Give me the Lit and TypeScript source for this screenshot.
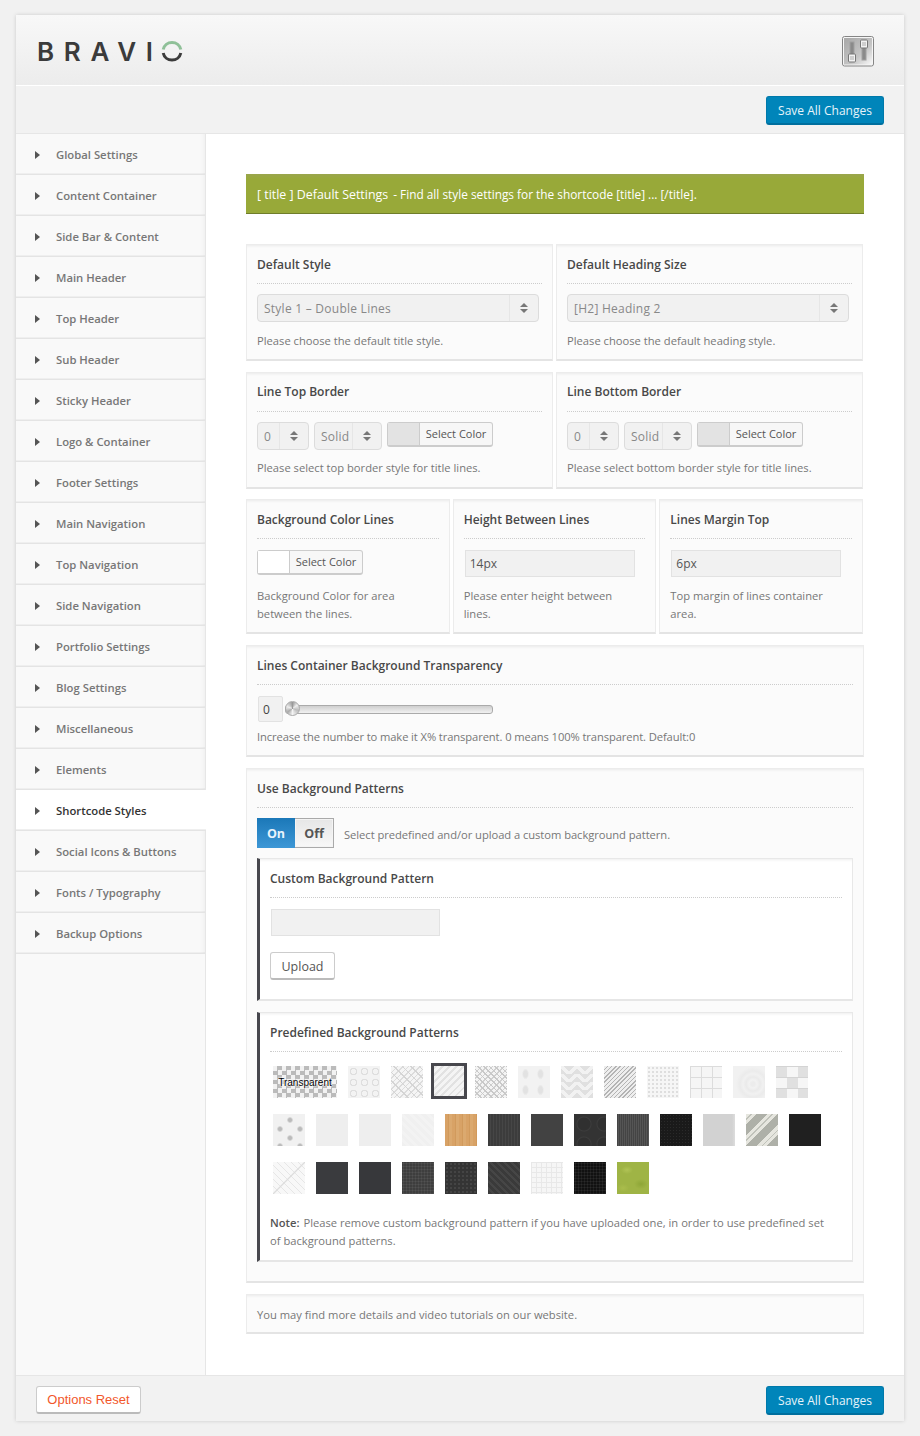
import { LitElement, html, css } from 'lit'
import { customElement } from 'lit/decorators.js'

const NAV = [
  'Global Settings', 'Content Container', 'Side Bar & Content', 'Main Header', 'Top Header',
  'Sub Header', 'Sticky Header', 'Logo & Container', 'Footer Settings', 'Main Navigation',
  'Top Navigation', 'Side Navigation', 'Portfolio Settings', 'Blog Settings', 'Miscellaneous',
  'Elements', 'Shortcode Styles', 'Social Icons & Buttons', 'Fonts / Typography', 'Backup Options',
]

// one class per pattern swatch, in the order of the grid
const SWATCHES = [
  'rings', 'cross', 'sel', 'weave', 'damask', 'zig', 'diag', 'dots', 'grid', 'swirl', 'tiles',
  'studs', 'plain', 'plain', 'plain2', 'wood', 'darklines', 'dark', 'hex', 'darklines2', 'black', 'silver', 'stripe', 'black2',
  'chev', 'dark2', 'dark3', 'dark4', 'dark5', 'dark6', 'dots2', 'black3', 'green',
]

@customElement('app-root')
export class AppRoot extends LitElement {
  static styles = css`
    :host {
      display: block;
      background: #f1f1f1;
      font-family: 'Open Sans', sans-serif;
      padding: 15px 16px;
      height: 1436px;
      box-sizing: border-box;
    }

    .frame {
      background: #fff;
      box-shadow: 0 0 4px rgba(0, 0, 0, 0.16);
      height: 1406px;
      display: flex;
      flex-direction: column;
    }

    .head {
      height: 71px;
      box-sizing: border-box;
      background: linear-gradient(#f8f8f8, #ececec);
      border-bottom: 1px solid #fff;
      display: flex;
      align-items: center;
      justify-content: space-between;
      padding: 0 30px 0 21px;
      flex: none;
    }

    .logo {
      display: flex;
      align-items: center;
      color: #3b3b3b;
      font: 600 26px Inter, sans-serif;
      letter-spacing: 9.7px;
      line-height: 22px;
      margin-top: 3px;
    }

    .logo svg {
      display: block;
      margin-left: -2px;
      margin-top: -1px;
    }

    .tools {
      display: block;
      margin-top: 2px;
    }

    .toolbar {
      height: 48px;
      box-sizing: border-box;
      background: #f2f2f2;
      border-bottom: 1px solid #e6e6e6;
      display: flex;
      align-items: flex-start;
      justify-content: flex-end;
      padding: 10px 20px 0;
      flex: none;
    }

    .save {
      width: 118px;
      height: 29px;
      box-sizing: border-box;
      background: #0085ba;
      border: 1px solid #0079aa;
      border-bottom: 2px solid #006f9e;
      border-radius: 3px;
      color: #e6f4fa;
      font-size: 12px;
      line-height: 27px;
      text-align: center;
    }

    .body {
      flex: 1;
      display: flex;
      min-height: 0;
    }

    .side {
      width: 190px;
      box-sizing: border-box;
      background: #f9f9f9;
      border-right: 1px solid #e6e6e6;
      flex: none;
    }

    .item {
      height: 41px;
      box-sizing: border-box;
      border-bottom: 1px solid #e4e4e4;
      display: flex;
      align-items: center;
      padding: 1px 0 0 19px;
      font-size: 11.3px;
      font-weight: 600;
      color: #777;
      box-shadow: inset -6px 0 5px -5px rgba(0, 0, 0, 0.05), inset 0 -1px 0 #efefef;
    }

    .item::before {
      content: '';
      width: 0;
      height: 0;
      border-left: 5px solid #555;
      border-top: 4.5px solid transparent;
      border-bottom: 4.5px solid transparent;
      margin-right: 16px;
    }

    .item.on {
      background: #fff;
      color: #333;
      box-shadow: inset 0 -1px 0 #efefef;
      margin-right: -1px;
      position: relative;
    }

    .main {
      flex: 1;
      padding: 40px 40px 0;
      min-width: 0;
    }

    .banner {
      height: 40px;
      box-sizing: border-box;
      background: linear-gradient(#9aa54d, #98a939 5px);
      border-bottom: 1px solid #6f7d2a;
      color: #fff;
      font-size: 11.85px;
      line-height: 41px;
      padding-left: 11px;
      margin-bottom: 30px;
    }

    .banner b {
      font-size: 12.4px;
      font-weight: 400;
      margin-right: 2px;
    }

    .row {
      display: grid;
      gap: 3px;
      margin-right: 1px;
      margin-bottom: 11px;
    }

    .row.tight { margin-bottom: 10px; }
    .two { grid-template-columns: 1fr 1fr; }
    .three { grid-template-columns: 1fr 1fr 1fr; }

    .panel {
      box-sizing: border-box;
      background: #fbfbfb;
      border: 1px solid #ececec;
      border-bottom: 2px solid #e4e4e4;
      box-shadow: inset 0 3px 3px -2px rgba(0, 0, 0, 0.07);
      padding: 9px 10px 9px;
    }

    .panel.wide { margin-bottom: 11px; }

    .title {
      font-size: 12px;
      font-weight: 600;
      color: #484848;
      line-height: 20px;
      padding: 1px 0 8px;
      border-bottom: 1px dotted #ccc;
      margin-bottom: 10px;
    }

    .tight .panel { padding-bottom: 10px; }
    .tight .title { padding: 0 0 9px; }
    .tight .desc { margin-top: 9px; }

    .desc {
      font-size: 11.2px;
      line-height: 18px;
      color: #777;
      margin-top: 10px;
    }

    .three .desc { padding-right: 5px; }

    .controls {
      display: flex;
      align-items: center;
      height: 28px;
    }

    .select {
      height: 28px;
      box-sizing: border-box;
      background: #f1f1f1;
      border: 1px solid #dcdcdc;
      border-radius: 4px;
      display: flex;
      align-items: center;
      color: #888;
      font-size: 12px;
      letter-spacing: 0.25px;
    }

    .select.full { width: 282px; }
    .select.num { width: 52px; margin-right: 5px; }
    .select.solid { width: 68px; margin-right: 5px; }

    .select span {
      flex: 1;
      padding-left: 6px;
      white-space: nowrap;
    }

    .select .arrows {
      flex: none;
      width: 28px;
      height: 26px;
      border-left: 1px solid #e6e6e6;
      display: flex;
      flex-direction: column;
      align-items: center;
      justify-content: center;
      gap: 2px;
      padding: 0;
    }

    .arrows::before, .arrows::after {
      content: '';
      width: 0;
      height: 0;
      border-left: 4px solid transparent;
      border-right: 4px solid transparent;
    }

    .arrows::before { border-bottom: 4px solid #777; }
    .arrows::after { border-top: 4px solid #777; }

    .color {
      height: 25px;
      box-sizing: border-box;
      width: 106px;
      background: #f7f7f7;
      border: 1px solid #ccc;
      border-bottom-width: 2px;
      border-radius: 3px;
      display: flex;
      font-size: 11px;
      color: #555;
      line-height: 22px;
      margin-top: -3px;
    }

    .three .color { margin-top: -1px; }

    .color i {
      width: 31px;
      background: #e3e3e3;
      border-right: 1px solid #ccc;
    }

    .color i.white { background: #fff; }

    .color span {
      flex: 1;
      text-align: center;
    }

    .text {
      width: 170px;
      height: 27px;
      box-sizing: border-box;
      background: #f1f1f1;
      border: 1px solid #e2e2e2;
      font-size: 12px;
      color: #555;
      line-height: 25px;
      padding-left: 4px;
      margin-left: 1px;
      margin-top: 1px;
    }

    .slider-val {
      width: 25px;
      height: 26px;
      box-sizing: border-box;
      margin-left: 1px;
      background: #f1f1f1;
      border: 1px solid #e2e2e2;
      border-radius: 2px;
      font-size: 12px;
      color: #444;
      line-height: 26px;
      padding-left: 4px;
    }

    .track {
      position: relative;
      width: 208px;
      height: 9px;
      box-sizing: border-box;
      margin-left: 2px;
      margin-top: 1px;
      background: linear-gradient(#cfcfcf, #f1f1f1);
      border: 1px solid #aaa;
      border-radius: 3px;
    }

    .knob {
      position: absolute;
      left: -1px;
      top: -5px;
      width: 15px;
      height: 15px;
      box-sizing: border-box;
      border-radius: 50%;
      border: 1px solid #aaa;
      background: conic-gradient(#999, #eee 15%, #bbb 30%, #f4f4f4 50%, #aaa 65%, #eee 80%, #999);
    }

    .desc.tight {
      margin-top: 5px;
      letter-spacing: -0.1px;
    }

    .toggle-row {
      display: flex;
      align-items: center;
      height: 30px;
      margin-bottom: 10px;
      font-size: 11.2px;
      color: #777;
    }

    .toggle-note {
      padding-top: 2px;
      letter-spacing: -0.05px;
    }

    .toggle {
      display: flex;
      width: 77px;
      height: 30px;
      margin-right: 10px;
      font-size: 12.5px;
      font-weight: 700;
      line-height: 31px;
      text-align: center;
    }

    .toggle .yes {
      width: 38px;
      background: linear-gradient(#1b78b8, #3d97d6);
      color: #e8f4fc;
    }

    .toggle .no {
      flex: 1;
      box-sizing: border-box;
      background: linear-gradient(#e6e6e6, #f8f8f8);
      border: 1px solid #aaa;
      border-left: none;
      box-shadow: inset 0 0 0 1px #f4f4f4;
      color: #555;
      line-height: 29px;
    }

    .inner {
      background: #fff;
      border: 1px solid #e8e8e8;
      border-left: 3px solid #47474d;
      border-bottom: 2px solid #e6e6e6;
      box-sizing: border-box;
      box-shadow: inset 0 3px 3px -2px rgba(0, 0, 0, 0.07);
      padding: 9px 10px 0;
      margin-bottom: 11px;
    }

    .inner.upload { height: 143px; }
    .inner.patterns { height: 250px; margin-bottom: 10px; }

    .inner .text {
      width: 169px;
      margin: 11px 0 0 1px;
      display: block;
    }

    .upload-btn {
      display: block;
      width: 65px;
      height: 28px;
      box-sizing: border-box;
      margin-top: 16px;
      background: #fff;
      border: 1px solid #ccc;
      border-bottom: 2px solid #bbb;
      border-radius: 3px;
      font-size: 12.5px;
      color: #555;
      text-align: center;
      line-height: 27px;
    }

    .swatches {
      display: flex;
      flex-wrap: wrap;
      gap: 16px 11px;
      padding: 4px 0 0 3px;
      width: 568px;
      box-sizing: border-box;
    }

    .sw {
      width: 32px;
      height: 32px;
      background: #eee;
    }

    .note {
      margin-top: 20px;
      padding-right: 10px;
      font-size: 11.2px;
      line-height: 18px;
      color: #777;
    }

    .note b {
      font-weight: 600;
      color: #555;
      margin-right: 1px;
    }

    .footer-note {
      height: 40px;
      box-sizing: border-box;
      padding: 0 10px;
      font-size: 11.2px;
      line-height: 40px;
      color: #777;
    }

    .foot {
      height: 46px;
      box-sizing: border-box;
      background: #f2f2f2;
      border-top: 1px solid #e6e6e6;
      display: flex;
      align-items: flex-start;
      justify-content: space-between;
      padding: 10px 20px 0;
      flex: none;
    }

    .reset {
      width: 105px;
      height: 28px;
      box-sizing: border-box;
      background: #fff;
      border: 1px solid #ccc;
      border-bottom: 2px solid #bbb;
      border-radius: 3px;
      font: 13px 'Liberation Sans', sans-serif;
      color: #f2572b;
      text-align: center;
      line-height: 26px;
    }

    /* swatch patterns */
    .transparent {
      width: 64px;
      background: repeating-conic-gradient(#bbb 0 25%, #f2f2f2 0 50%) 0 0 / 9px 9px;
      font: 10px/33px 'Liberation Sans', sans-serif;
      color: #000;
      text-align: center;
      text-shadow: 0 0 2px #fff, 0 0 2px #fff, 0 0 1px #fff, 0 0 1px #fff;
    }
    .rings { background: radial-gradient(circle, transparent 2.5px, #dedede 2.5px, #dedede 3.5px, transparent 4px) 0 0 / 11px 11px, #f3f3f3; }
    .cross { background: repeating-linear-gradient(45deg, #d4d4d4 0 1px, transparent 1px 6px), repeating-linear-gradient(-45deg, #dcdcdc 0 1px, transparent 1px 4px), #f5f5f5; }
    .sel {
      box-sizing: border-box;
      width: 36px;
      height: 36px;
      margin: -3px -3px -1px;
      border: 3px solid #47474d;
      background: repeating-linear-gradient(-45deg, #e2e2e2 0 2px, #f4f4f4 2px 5px);
    }
    .weave { background: repeating-linear-gradient(45deg, #c8c8c8 0 1px, transparent 1px 4px), repeating-linear-gradient(-45deg, #d0d0d0 0 1px, transparent 1px 4px), #f4f4f4; }
    .damask { background: radial-gradient(ellipse 5px 8px, #e2e2e2 40%, transparent 70%) 0 0 / 15px 16px, #f2f2f2; }
    .zig {
      background:
        linear-gradient(135deg, #e0e0e0 25%, transparent 25%) -8px 0 / 16px 8px,
        linear-gradient(225deg, #e0e0e0 25%, transparent 25%) -8px 0 / 16px 8px,
        linear-gradient(315deg, #e0e0e0 25%, transparent 25%) 0 0 / 16px 8px,
        linear-gradient(45deg, #e0e0e0 25%, transparent 25%) 0 0 / 16px 8px,
        #f2f2f2;
    }
    .diag { background: repeating-linear-gradient(-45deg, #b4b4b4 0 1px, #eeeeee 1px 3px); }
    .dots { background: radial-gradient(circle, #dedede 1px, transparent 1.5px) 0 0 / 4px 4px, #f6f6f6; }
    .grid { background: linear-gradient(#dcdcdc 1px, transparent 1px) 0 0 / 11px 11px, linear-gradient(90deg, #dcdcdc 1px, transparent 1px) 0 0 / 11px 11px, #f5f5f5; }
    .swirl { background: radial-gradient(circle at 20px 18px, #ececec 2px, #f2f2f2 4px, #eaeaea 7px, #f1f1f1 10px, #ebebeb 13px, #f1f1f1 17px); }
    .tiles {
      background:
        linear-gradient(#d4d4d4 1px, transparent 1px) 0 0 / 11px 11px,
        repeating-conic-gradient(#f6f6f6 0 25%, #e0e0e0 0 50%) 0 0 / 22px 22px;
    }
    .studs {
      background:
        radial-gradient(circle at 17px 6px, #bbb 1.5px, #d6d6d6 2.5px, transparent 3.2px),
        radial-gradient(circle at 7px 15px, #bbb 1.5px, #d6d6d6 2.5px, transparent 3.2px),
        radial-gradient(circle at 27px 15px, #bbb 1.5px, #d6d6d6 2.5px, transparent 3.2px),
        radial-gradient(circle at 17px 24px, #bbb 1.5px, #d6d6d6 2.5px, transparent 3.2px),
        radial-gradient(circle at 7px 32px, #bbb 1.5px, #d6d6d6 2.5px, transparent 3.2px),
        radial-gradient(circle at 27px 32px, #bbb 1.5px, #d6d6d6 2.5px, transparent 3.2px),
        #f1f1f1;
    }
    .plain { background: #eee; }
    .plain2 { background: repeating-linear-gradient(45deg, #f0f0f0 0 3px, #f3f3f3 3px 6px); }
    .wood { background: repeating-linear-gradient(90deg, #d8a266 0 3px, #d19a5c 3px 4px, #dba96f 4px 7px); }
    .darklines { background: repeating-linear-gradient(90deg, #3c3c3c 0 2px, #464646 2px 3px); }
    .dark { background: #424242; }
    .hex { background: radial-gradient(circle, #303030 6px, #3c3c3c 7px, #333 8px) 0 0 / 20px 20px; }
    .darklines2 { background: repeating-linear-gradient(90deg, #444 0 1px, #555 1px 2px); }
    .black { background: radial-gradient(circle, #2a2a2a 0.7px, #1a1a1a 1px) 0 0 / 3px 3px; }
    .silver { background: linear-gradient(90deg, transparent 29px, #ddd), #d2d2d2; }
    .stripe { background: repeating-linear-gradient(-45deg, #aeb0a8 0 8px, #e6e6df 8px 11px, #c0c2ba 11px 12px, #e6e6df 12px 15px); }
    .black2 { background: #202020; }
    .chev {
      background:
        linear-gradient(-45deg, transparent 48%, #ddd 49%, #ddd 51%, transparent 52%),
        repeating-linear-gradient(45deg, #e6e6e6 0 1px, #f8f8f8 1px 5px);
    }
    .dark2 { background: #3a3b3e; }
    .dark3 { background: #37383b; }
    .dark4 { background: radial-gradient(circle, #525252 0.8px, #3e3e3e 1.2px) 0 0 / 3px 3px; }
    .dark5 { background: radial-gradient(circle, #444 0.8px, #343434 1.2px) 0 0 / 4px 4px; }
    .dark6 { background: repeating-linear-gradient(45deg, #3a3a3a 0 3px, #464646 3px 5px); }
    .dots2 { background: linear-gradient(#e8e8e8 1px, transparent 1px) 0 0 / 5px 5px, linear-gradient(90deg, #e8e8e8 1px, transparent 1px) 0 0 / 5px 5px, #f6f6f6; }
    .black3 { background: radial-gradient(circle, #2a2a2a 0.8px, #111 1.2px) 0 0 / 3px 3px; }
    .green {
      background:
        radial-gradient(ellipse 6px 4px at 10px 8px, #b0c355, transparent),
        radial-gradient(ellipse 7px 5px at 24px 22px, #8ea637, transparent),
        radial-gradient(ellipse 6px 4px at 6px 26px, #aabd4c, transparent),
        #9fb445;
    }
  `

  private arrows() {
    return html`<span class="arrows"></span>`
  }

  private dropdown(kind: string, label: string) {
    return html`<div class="select ${kind}"><span>${label}</span>${this.arrows()}</div>`
  }

  private borderPanel(title: string, desc: string) {
    return html`
      <div class="panel">
        <div class="title">${title}</div>
        <div class="controls">
          ${this.dropdown('num', '0')}
          ${this.dropdown('solid', 'Solid')}
          <div class="color"><i></i><span>Select Color</span></div>
        </div>
        <div class="desc">${desc}</div>
      </div>
    `
  }

  render() {
    return html`
      <div class="frame">
        <div class="head">
          <div class="logo">
            <span>BRAVI</span>
            <svg width="22" height="22" viewBox="0 0 22 22">
              <path d="M2.2 9.5A9 9 0 0 1 19.8 9.5" fill="none" stroke="#8fc098" stroke-width="3"/>
              <path d="M2.2 13A9 9 0 0 0 19.8 13" fill="none" stroke="#3b3b3b" stroke-width="3"/>
            </svg>
          </div>
          <svg class="tools" width="32" height="31" viewBox="0 0 32 31">
            <defs>
              <linearGradient id="g" x1="0.1" y1="0.1" x2="0.95" y2="0.95">
                <stop offset="0" stop-color="#acacac"/><stop offset="0.6" stop-color="#c6c6c6"/><stop offset="1" stop-color="#f2f2f2"/>
              </linearGradient>
            </defs>
            <rect x="0.5" y="0.5" width="31" height="29.5" rx="2" fill="#f6f6f6" stroke="#858585"/>
            <rect x="2" y="2" width="28" height="26.5" fill="url(#g)"/>
            <rect x="8" y="6" width="4" height="13" fill="#8a8a8a" stroke="#a0a0a0"/>
            <rect x="6.5" y="18" width="7" height="8" rx="1" fill="#f2f2f2" stroke="#777"/>
            <path d="M8 21h4M8 23h4" stroke="#aaa"/>
            <rect x="20" y="11" width="4" height="13" fill="#8a8a8a" stroke="#a0a0a0"/>
            <rect x="18.5" y="4" width="7" height="8" rx="1" fill="#f2f2f2" stroke="#777"/>
            <path d="M20 7h4M20 9h4" stroke="#aaa"/>
          </svg>
        </div>

        <div class="toolbar"><div class="save">Save All Changes</div></div>

        <div class="body">
          <div class="side">
            ${NAV.map(n => html`<div class="item ${n === 'Shortcode Styles' ? 'on' : ''}">${n}</div>`)}
          </div>

          <div class="main">
            <div class="banner">
              <b>[ title ] Default Settings</b> - Find all style settings for the shortcode [title] ... [/title].
            </div>

            <div class="row two">
              <div class="panel">
                <div class="title">Default Style</div>
                ${this.dropdown('full', 'Style 1 – Double Lines')}
                <div class="desc">Please choose the default title style.</div>
              </div>
              <div class="panel">
                <div class="title">Default Heading Size</div>
                ${this.dropdown('full', '[H2] Heading 2')}
                <div class="desc">Please choose the default heading style.</div>
              </div>
            </div>

            <div class="row two tight">
              ${this.borderPanel('Line Top Border', 'Please select top border style for title lines.')}
              ${this.borderPanel('Line Bottom Border', 'Please select bottom border style for title lines.')}
            </div>

            <div class="row three">
              <div class="panel">
                <div class="title">Background Color Lines</div>
                <div class="controls"><div class="color"><i class="white"></i><span>Select Color</span></div></div>
                <div class="desc">Background Color for area between the lines.</div>
              </div>
              <div class="panel">
                <div class="title">Height Between Lines</div>
                <div class="controls"><div class="text">14px</div></div>
                <div class="desc">Please enter height between lines.</div>
              </div>
              <div class="panel">
                <div class="title">Lines Margin Top</div>
                <div class="controls"><div class="text">6px</div></div>
                <div class="desc">Top margin of lines container area.</div>
              </div>
            </div>

            <div class="panel wide">
              <div class="title">Lines Container Background Transparency</div>
              <div class="controls">
                <div class="slider-val">0</div>
                <div class="track"><div class="knob"></div></div>
              </div>
              <div class="desc tight">Increase the number to make it X% transparent. 0 means 100% transparent. Default:0</div>
            </div>

            <div class="panel wide">
              <div class="title">Use Background Patterns</div>
              <div class="toggle-row">
                <div class="toggle"><div class="yes">On</div><div class="no">Off</div></div>
                <span class="toggle-note">Select predefined and/or upload a custom background pattern.</span>
              </div>

              <div class="inner upload">
                <div class="title">Custom Background Pattern</div>
                <div class="text"></div>
                <div class="upload-btn">Upload</div>
              </div>

              <div class="inner patterns">
                <div class="title">Predefined Background Patterns</div>
                <div class="swatches">
                  <div class="sw transparent">Transparent</div>
                  ${SWATCHES.map(s => html`<div class="sw ${s}"></div>`)}
                </div>
                <div class="note"><b>Note:</b> Please remove custom background pattern if you have uploaded one, in order to use predefined set of background patterns.</div>
              </div>
            </div>

            <div class="panel footer-note">You may find more details and video tutorials on our website.</div>
          </div>
        </div>

        <div class="foot">
          <div class="reset">Options Reset</div>
          <div class="save">Save All Changes</div>
        </div>
      </div>
    `
  }
}

declare global {
  interface HTMLElementTagNameMap {
    'app-root': AppRoot
  }
}
